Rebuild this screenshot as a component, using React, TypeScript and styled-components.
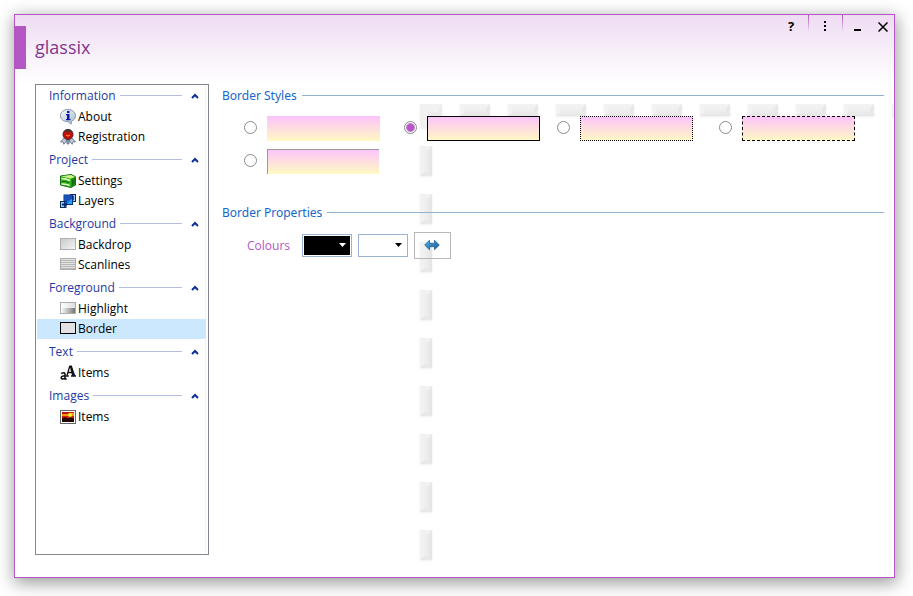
import React, { useState } from "react";
import styled, { createGlobalStyle } from "styled-components";

const GlobalStyle = createGlobalStyle`
  * { box-sizing: border-box; }
  body {
    margin: 0;
    background: #fff;
    color: #000;
    font-family: "Open Sans", "Noto Sans", sans-serif;
    font-size: 12px;
    line-height: 16px;
  }
  button, input, select { font: inherit; color: inherit; margin: 0; }
  button { background: none; border: 0; padding: 0; cursor: default; }
`;

const Desktop = styled.div`
  display: flex;
  min-height: 100vh;
  padding: 14px 18px 18px 14px;
  overflow: hidden;
`;

const Window = styled.div`
  position: relative;
  isolation: isolate;
  flex: 1;
  display: flex;
  flex-direction: column;
  border: 1px solid #b556c5;
  background: #fff;
  box-shadow: 1px 4px 16px 1px rgba(0, 0, 0, 0.4);
`;

const Header = styled.header`
  display: flex;
  justify-content: space-between;
  align-items: flex-start;
  height: 69px;
  background: linear-gradient(#efdcf3, #fff);
`;

const Brand = styled.div`
  display: flex;
  align-items: center;
  gap: 9px;
  margin-top: 11px;
`;

const BrandTab = styled.span`
  width: 11px;
  height: 43px;
  background: #b556c5;
`;

const Title = styled.h1`
  margin: 0 0 2px;
  font-size: 18px;
  line-height: 24px;
  font-weight: 400;
  color: #84378f;
`;

const WindowButtons = styled.div`
  display: flex;
`;

const WindowButton = styled.button<{ $width: number }>`
  display: flex;
  align-items: center;
  justify-content: center;
  width: ${(p) => p.$width}px;
  height: 22px;
  font-size: 13px;
  font-weight: 700;
`;

const ButtonDivider = styled.span`
  width: 1px;
  height: 16px;
  background: linear-gradient(#b556c5, #ecd5f1);
`;

const Body = styled.div`
  flex: 1;
  display: flex;
  gap: 13px;
  padding: 0 10px 22px 20px;
`;

const Sidebar = styled.nav`
  display: flex;
  width: 174px;
  flex: none;
  padding: 0 2px 0 1px;
  border: 1px solid #828790;
  background: #fff;
`;

const GroupList = styled.div`
  flex: 1;
  display: flex;
  flex-direction: column;
  gap: 2px;
  box-shadow: inset -1px 0 #e9f4fd;
`;

const GroupHeader = styled.button`
  display: flex;
  align-items: center;
  width: 100%;
  height: 22px;
  padding: 0 7px 0 12px;
  color: #1e3a9f;
`;

const GroupRule = styled.span`
  flex: 1;
  height: 1px;
  margin: 0 9px 2px 4px;
  background: #b0bde0;
`;

const ItemButton = styled.button<{ $selected: boolean }>`
  display: flex;
  align-items: center;
  gap: 2px;
  width: 100%;
  height: 20px;
  padding-left: 23px;
  background: ${(p) => (p.$selected ? "#cce8ff" : "transparent")};
`;

const Main = styled.main`
  flex: 1;
  min-width: 0;
  display: flex;
  flex-direction: column;
  gap: 28px;
  padding-top: 3px;
`;

const Section = styled.section`
  display: flex;
  flex-direction: column;
`;

const SectionTitle = styled.h2`
  display: flex;
  align-items: center;
  gap: 5px;
  margin: 0;
  font-family: "Noto Sans", "Open Sans", sans-serif;
  font-size: 12px;
  line-height: 17px;
  font-weight: 400;
  color: #1667cf;

  &::after {
    content: "";
    flex: 1;
    height: 1px;
    background: #92b0d0;
  }
`;

const StyleGrid = styled.div`
  display: grid;
  grid-template-columns: 160px 153px 162px 136px;
  row-gap: 8px;
  padding: 12px 0 2px 22px;
`;

const StyleOption = styled.label`
  display: flex;
  align-items: center;
  gap: 10px;
  height: 25px;
`;

const Radio = styled.input`
  appearance: none;
  width: 13px;
  height: 13px;
  border: 1px solid #8a8a8a;
  border-radius: 50%;
  background: #fff;

  && {
    margin-bottom: 2px;
  }

  &:checked {
    background: radial-gradient(circle, #b556c5 0 3px, #c883d4 4px, #fff 5px);
  }
`;

const Swatch = styled.span<{ $border: string }>`
  width: ${(p) => (p.$border === "corner" ? 112 : 113)}px;
  height: 25px;
  background: linear-gradient(#fcc2fb, #fffac3) border-box;
  ${(p) =>
    p.$border === "corner"
      ? "border: solid #999; border-width: 1px 0 0 1px;"
      : p.$border === "none"
        ? ""
        : `border: 1px ${p.$border} #000;`}
`;

const PropertyRow = styled.div`
  display: flex;
  align-items: center;
  padding: 11px 0 0 25px;
`;

const PropertyLabel = styled.span`
  width: 55px;
  color: #b556c5;
`;

const ColourBox = styled.span`
  position: relative;
  display: flex;
  margin-right: 6px;
`;

const ColourSelect = styled.select<{ $colour: string }>`
  appearance: none;
  width: 50px;
  height: 23px;
  padding: 1px;
  border: 1px solid #9ab3d2;
  border-radius: 0;
  background: ${(p) => p.$colour} content-box;
  background-clip: content-box;
  font-size: 0;
`;

const ColourArrow = styled.svg`
  position: absolute;
  right: 6px;
  top: 9px;
  pointer-events: none;
`;

const SwapButton = styled.button`
  display: flex;
  align-items: center;
  justify-content: center;
  width: 37px;
  height: 27px;
  border: 1px solid #b8b8b8;
`;

const Ornament = styled.svg`
  position: absolute;
  z-index: -1;
  left: 402px;
  top: 86px;
  width: calc(100% - 402px);
  height: calc(100% - 86px);
`;

type IconName =
  | "about" | "registration" | "settings" | "layers" | "backdrop"
  | "scanlines" | "highlight" | "border" | "text" | "image";

const drawings: Record<IconName, React.ReactNode> = {
  about: (
    <>
      <path d="M8 .5c4.300 0 7.500 2.600 7.500 6.200 0 2.600-1.500 4.500-4 5.500l-.4 3-3-2.500C3.700 12.700.5 10.200.5 6.700S3.700.5 8 .5z" fill="url(#bubble)" stroke="#8a949e" />
      <path d="M7 2h2.500v2H7zM6 5h3.500v5h1v1.300H6V10h1V6.300H6z" fill="#0a18b0" />
    </>
  ),
  registration: (
    <>
      <path d="M4 9L.5 13l2.300-.2 1 2.500 2.700-3.300h3l2.700 3.300 1-2.500 2.300.2L12 9z" fill="#b9c8dc" stroke="#5f6c80" strokeWidth=".8" />
      <path d="M6.500 11h3l-.6 4H7.100z" fill="#8fa3bf" stroke="#4c5870" strokeWidth=".6" />
      <circle cx="8" cy="5.500" r="5" fill="#c40d08" stroke="#4c1f1d" />
      <path d="M3.300 3.500Q4.500.2 8 .2t4.700 3.300Q8 2 3.300 3.500" fill="#4a3230" />
      <path d="M6 6.200q2 1.700 4 0" fill="none" stroke="#ff9b3d" />
    </>
  ),
  settings: (
    <>
      <path d="M.5 3L11 1.500l4.500 2.200v8.300L11 14.500.5 12z" fill="#35b416" stroke="#146b12" />
      <path d="M1 3.300l10-1.300 4 2-4.500 1.500z" fill="#c9f78e" />
      <path d="M11.200 6L15 4.300v7.400l-3.800 2.300z" fill="#1d8a1c" />
      <path d="M1.500 5.500q4 0 8.500 2M1.500 11q4.500-.2 8 1.500" fill="none" stroke="#eaffd2" strokeWidth="1.500" />
      <path d="M2 8.500q4-.6 7 1.300M12.500 7v5M14 6v5" fill="none" stroke="#0d6615" />
    </>
  ),
  layers: (
    <>
      <rect x="10.500" y="1.500" width="5" height="7" fill="#9ecbf0" stroke="#15294f" />
      <rect x="12.500" y="3" width="1.500" height="4" fill="#28548f" />
      <rect x="4" y="2" width="8.500" height="9.500" fill="#137be0" stroke="#072c80" />
      <path d="M4.500 2.500H12V6L4.500 9z" fill="#1b4fb8" />
      <path d="M7 11l5-5v5z" fill="#28a4f4" />
      <rect x=".5" y="8.500" width="5.500" height="6" fill="#8ed9e8" stroke="#102a50" />
      <path d="M2 10.500h2V8.500l4 3-4 3v-2H2z" fill="#0b2a78" />
    </>
  ),
  backdrop: <rect x=".5" y="1.500" width="15" height="11" fill="url(#grey)" stroke="#b0b0b0" />,
  scanlines: (
    <>
      <rect x=".5" y="1.500" width="15" height="11" fill="#e4e4e4" stroke="#adadad" />
      <path d="M1 3.500h14M1 5.500h14M1 7.500h14M1 9.500h14M1 11.500h14" stroke="#b6b6b6" />
    </>
  ),
  highlight: (
    <>
      <rect x=".5" y="1.500" width="15" height="11" fill="url(#shineTop)" stroke="#adadad" />
      <rect x="1" y="7" width="14" height="5" fill="url(#shineLow)" />
    </>
  ),
  border: <rect x=".5" y="1.500" width="15" height="11" fill="#e2e2e2" stroke="#000" />,
  text: (
    <>
      <path d="M7 10.500L9.800 1M8.300 7.500H13" fill="none" stroke="#111" strokeWidth="1.300" />
      <path d="M9.500.5h2.300l3.400 10.500h-3z" fill="#111" />
      <path d="M13.300 5l1.900 6h-1.500z" fill="#101da0" />
      <path d="M5.700 11h3M11 11h5" stroke="#111" strokeWidth="1.300" />
      <path d="M1.200 8.500Q5 6.500 5 9.500V14h1.700M5 10.800q-4 .2-3.800 2t3.800.8" fill="none" stroke="#111" strokeWidth="1.600" />
    </>
  ),
  image: (
    <>
      <rect x=".5" y="1.500" width="15" height="13" fill="#fff" stroke="#666" />
      <rect x="2" y="3" width="12" height="10" fill="#d61d08" />
      <path d="M2 4h12v3H2z" fill="#ef9a0b" />
      <path d="M2 3h7v2H2z" fill="#b81405" />
      <circle cx="10" cy="6" r="2" fill="#fff12c" />
      <path d="M2 9l3-.7 3 .9 2-.8 4 .6v4H2z" fill="#220704" />
    </>
  ),
};

const groups: { name: string; items: { label: string; icon: IconName }[] }[] = [
  { name: "Information", items: [{ label: "About", icon: "about" }, { label: "Registration", icon: "registration" }] },
  { name: "Project", items: [{ label: "Settings", icon: "settings" }, { label: "Layers", icon: "layers" }] },
  { name: "Background", items: [{ label: "Backdrop", icon: "backdrop" }, { label: "Scanlines", icon: "scanlines" }] },
  { name: "Foreground", items: [{ label: "Highlight", icon: "highlight" }, { label: "Border", icon: "border" }] },
  { name: "Text", items: [{ label: "Items", icon: "text" }] },
  { name: "Images", items: [{ label: "Items", icon: "image" }] },
];

const borderStyles = [
  { id: "none", label: "No border" },
  { id: "solid", label: "Solid" },
  { id: "dotted", label: "Dotted" },
  { id: "dashed", label: "Dashed" },
  { id: "corner", label: "Raised" },
];

function ItemIcon({ name }: { name: IconName }) {
  return (
    <svg width="16" height="16" viewBox="0 0 16 16" aria-hidden="true">
      {drawings[name]}
    </svg>
  );
}

function Chevron({ open }: { open: boolean }) {
  return (
    <svg width="8" height="6" viewBox="0 0 8 6" aria-hidden="true">
      <path d={open ? "M1 5l3-3 3 3" : "M1 1l3 3 3-3"} fill="none" stroke="#0a2f9c" strokeWidth="2" />
    </svg>
  );
}

function NavGroup({ name, items, selected, onSelect }: (typeof groups)[number] & {
  selected: string;
  onSelect: (id: string) => void;
}) {
  const [open, setOpen] = useState(true);
  return (
    <div>
      <GroupHeader aria-expanded={open} onClick={() => setOpen(!open)}>
        {name}
        <GroupRule />
        <Chevron open={open} />
      </GroupHeader>
      {open &&
        items.map((item) => (
          <ItemButton
            key={item.label}
            $selected={selected === name + item.label}
            onClick={() => onSelect(name + item.label)}
          >
            <ItemIcon name={item.icon} />
            {item.label}
          </ItemButton>
        ))}
    </div>
  );
}

/* The faint bevelled dashed outline behind the page, with the gradients the icons share. */
function Dashes() {
  return (
    <Ornament aria-hidden="true">
      <defs>
        <linearGradient id="bubble" x2="1" y2="1">
          <stop stopColor="#f5fbff" />
          <stop offset="1" stopColor="#a9bccf" />
        </linearGradient>
        <linearGradient id="grey" x2="1" y2="1">
          <stop stopColor="#c9c9c9" />
          <stop offset="1" stopColor="#f5f5f5" />
        </linearGradient>
        <linearGradient id="shineTop">
          <stop stopColor="#fff" />
          <stop offset="1" stopColor="#ddd" />
        </linearGradient>
        <linearGradient id="shineLow">
          <stop stopColor="#fff" />
          <stop offset="1" stopColor="#777" />
        </linearGradient>
        <linearGradient id="lyingFill" x2="0" y2="1">
          <stop stopColor="#f3f3f3" />
          <stop offset=".5" stopColor="#efefef" />
          <stop offset="1" stopColor="#e6e6e6" />
        </linearGradient>
        <linearGradient id="standingFill">
          <stop stopColor="#f3f3f3" />
          <stop offset=".5" stopColor="#eeeeee" />
          <stop offset="1" stopColor="#e4e4e4" />
        </linearGradient>
        <filter id="soft" x="-30%" y="-30%" width="160%" height="160%">
          <feDropShadow dx="0" dy="1" stdDeviation="1" floodColor="#000" floodOpacity=".07" />
        </filter>
        <g id="lying" filter="url(#soft)">
          <path d="M0 0h30v12H0z" fill="url(#lyingFill)" />
          <path d="M0 0l4 4v5l-4 3z" fill="#f3f3f3" />
          <path d="M30 0l-4 4v5l4 3z" fill="#e9e9e9" />
        </g>
        <g id="standing" filter="url(#soft)">
          <path d="M0 0h12v30H0z" fill="url(#standingFill)" />
          <path d="M0 0h12L8 4H4z" fill="#f2f2f2" />
          <path d="M0 30h12l-4-4H4z" fill="#e9e9e9" />
        </g>
      </defs>
      <g transform="translate(3 3)">
        <path d="M0 0h22v12H12v12H0z" fill="#f1f1f1" filter="url(#soft)" />
        <path d="M22 0v12H12v10L8 24V8h10z" fill="#ebebeb" />
        {Array.from({ length: 40 }, (_, i) => (
          <use key={i} href="#lying" x={40 + i * 48} />
        ))}
        {Array.from({ length: 9 }, (_, i) => (
          <use key={i} href="#standing" y={42 + i * 48} />
        ))}
      </g>
    </Ornament>
  );
}

function ColourPicker({ label, value, onChange }: {
  label: string;
  value: string;
  onChange: (colour: string) => void;
}) {
  return (
    <ColourBox>
      <ColourSelect aria-label={label} $colour={value} value={value} onChange={(e) => onChange(e.target.value)}>
        <option value="#000">Black</option>
        <option value="#fff">White</option>
      </ColourSelect>
      <ColourArrow width="7" height="4" viewBox="0 0 7 4" aria-hidden="true">
        <path d="M0 0h7L3.500 4z" fill={value === "#000" ? "#fff" : "#000"} />
      </ColourArrow>
    </ColourBox>
  );
}

export default function App() {
  const [selected, setSelected] = useState("ForegroundBorder");
  const [border, setBorder] = useState("solid");
  const [colours, setColours] = useState(["#000", "#fff"]);

  return (
    <>
      <GlobalStyle />
      <Desktop>
        <Window>
          <Dashes />
          <Header>
            <Brand>
              <BrandTab />
              <Title>glassix</Title>
            </Brand>
            <WindowButtons>
              <WindowButton $width={34} aria-label="Help">?</WindowButton>
              <ButtonDivider />
              <WindowButton $width={33} aria-label="More">
                <svg width="3" height="10" viewBox="0 0 3 10">
                  <path d="M0 0h2v2H0zM0 4h2v2H0zM0 8h2v2H0z" />
                </svg>
              </WindowButton>
              <ButtonDivider />
              <WindowButton $width={30} aria-label="Minimise">
                <svg width="8" height="12" viewBox="0 0 8 12">
                  <path d="M0 9h7v2H0z" />
                </svg>
              </WindowButton>
              <WindowButton $width={21} aria-label="Close">
                <svg width="11" height="12" viewBox="0 0 11 12">
                  <path d="M.5 2.500l9 9M9.500 2.500l-9 9" fill="none" stroke="#000" strokeWidth="1.500" />
                </svg>
              </WindowButton>
            </WindowButtons>
          </Header>
          <Body>
            <Sidebar aria-label="Options">
              <GroupList>
                {groups.map((g) => (
                  <NavGroup key={g.name} {...g} selected={selected} onSelect={setSelected} />
                ))}
              </GroupList>
            </Sidebar>
            <Main>
              <Section>
                <SectionTitle>Border Styles</SectionTitle>
                <StyleGrid role="radiogroup" aria-label="Border Styles">
                  {borderStyles.map((s) => (
                    <StyleOption key={s.id}>
                      <Radio
                        type="radio"
                        name="border-style"
                        aria-label={s.label}
                        checked={border === s.id}
                        onChange={() => setBorder(s.id)}
                      />
                      <Swatch $border={s.id} />
                    </StyleOption>
                  ))}
                </StyleGrid>
              </Section>
              <Section>
                <SectionTitle>Border Properties</SectionTitle>
                <PropertyRow>
                  <PropertyLabel>Colours</PropertyLabel>
                  <ColourPicker label="First colour" value={colours[0]} onChange={(c) => setColours([c, colours[1]])} />
                  <ColourPicker label="Second colour" value={colours[1]} onChange={(c) => setColours([colours[0], c])} />
                  <SwapButton aria-label="Swap colours" onClick={() => setColours([colours[1], colours[0]])}>
                    <svg width="17" height="13" viewBox="0 0 17 13">
                      <defs>
                        <linearGradient id="arrow" x2="1" y2="1">
                          <stop stopColor="#56b4ee" />
                          <stop offset="1" stopColor="#14548c" />
                        </linearGradient>
                      </defs>
                      <path d="M.7 6L5.500 1.200V4.300h5V1.200L15.300 6l-4.800 4.800V7.700h-5v3.100z" fill="url(#arrow)" stroke="#1c6296" strokeWidth=".8" />
                    </svg>
                  </SwapButton>
                </PropertyRow>
              </Section>
            </Main>
          </Body>
        </Window>
      </Desktop>
    </>
  );
}
